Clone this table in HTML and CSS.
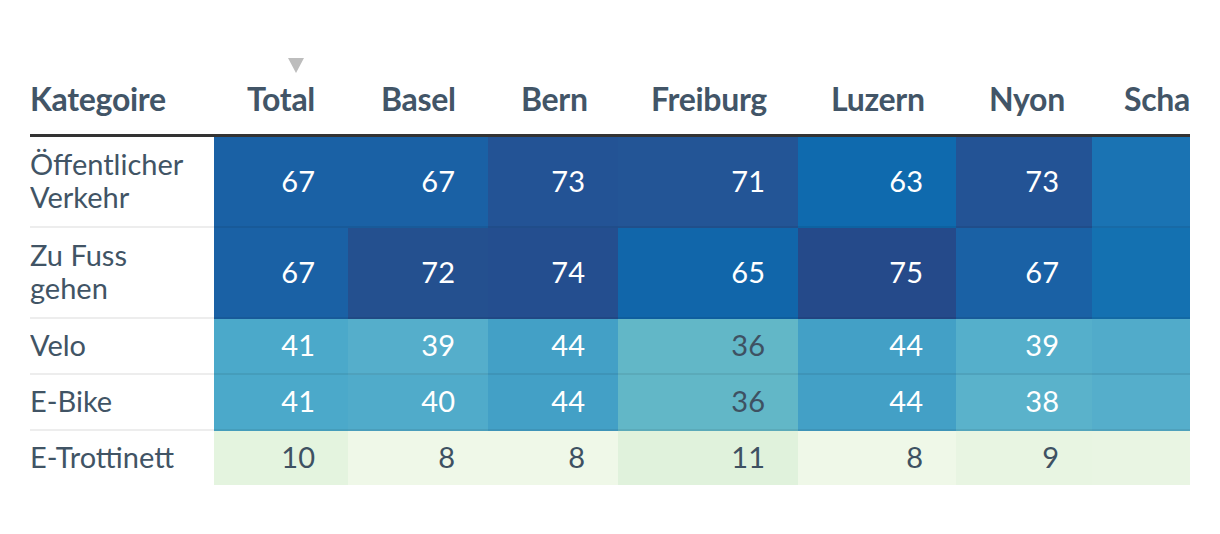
FILE: index.html
```html
<!DOCTYPE html>
<html lang="de">
<head>
<meta charset="utf-8">
<title>Tabelle</title>
<link rel="stylesheet" href="styles.css">
</head>
<body>
<div class="wrap">
  <table class="heat">
    <colgroup>
      <col class="c-cat">
      <col class="c-total">
      <col class="c-basel">
      <col class="c-bern">
      <col class="c-freiburg">
      <col class="c-luzern">
      <col class="c-nyon">
      <col class="c-scha">
    </colgroup>
    <thead>
      <tr>
        <th class="cat">Kategoire</th>
        <th class="num sorted">Total<span class="sort-arrow"></span></th>
        <th class="num">Basel</th>
        <th class="num">Bern</th>
        <th class="num">Freiburg</th>
        <th class="num">Luzern</th>
        <th class="num">Nyon</th>
        <th class="num scha">Scha</th>
      </tr>
    </thead>
    <tbody>
      <tr class="tall">
        <td class="cat">Öffentlicher<br>Verkehr</td>
        <td class="num light" style="background:#1a61a5">67</td>
        <td class="num light" style="background:#1a61a5">67</td>
        <td class="num light" style="background:#235395">73</td>
        <td class="num light" style="background:#235596">71</td>
        <td class="num light" style="background:#0f6aae">63</td>
        <td class="num light" style="background:#235395">73</td>
        <td class="num light" style="background:#1a73b3"></td>
      </tr>
      <tr class="tall">
        <td class="cat">Zu Fuss<br>gehen</td>
        <td class="num light" style="background:#1a61a5">67</td>
        <td class="num light" style="background:#24508f">72</td>
        <td class="num light" style="background:#244e8f">74</td>
        <td class="num light" style="background:#1166aa">65</td>
        <td class="num light" style="background:#254a8a">75</td>
        <td class="num light" style="background:#1a61a5">67</td>
        <td class="num light" style="background:#1471b1"></td>
      </tr>
      <tr>
        <td class="cat">Velo</td>
        <td class="num light" style="background:#4ba9ca">41</td>
        <td class="num light" style="background:#55aecb">39</td>
        <td class="num light" style="background:#43a0c6">44</td>
        <td class="num dark" style="background:#62b7c7">36</td>
        <td class="num light" style="background:#43a0c6">44</td>
        <td class="num light" style="background:#55afcb">39</td>
        <td class="num light" style="background:#51abca"></td>
      </tr>
      <tr>
        <td class="cat">E-Bike</td>
        <td class="num light" style="background:#4ba9ca">41</td>
        <td class="num light" style="background:#50abca">40</td>
        <td class="num light" style="background:#43a0c6">44</td>
        <td class="num dark" style="background:#62b7c7">36</td>
        <td class="num light" style="background:#43a0c6">44</td>
        <td class="num light" style="background:#5ab2cb">38</td>
        <td class="num light" style="background:#55aecb"></td>
      </tr>
      <tr class="last">
        <td class="cat">E-Trottinett</td>
        <td class="num dark" style="background:#e4f4df">10</td>
        <td class="num dark" style="background:#eff8e8">8</td>
        <td class="num dark" style="background:#eff8e8">8</td>
        <td class="num dark" style="background:#e0f2dc">11</td>
        <td class="num dark" style="background:#eff8e8">8</td>
        <td class="num dark" style="background:#e8f5e2">9</td>
        <td class="num dark" style="background:#e9f5e3"></td>
      </tr>
    </tbody>
  </table>
</div>
</body>
</html>
```

FILE: styles.css
```css
html, body {
  margin: 0;
  padding: 0;
  background: #ffffff;
}

body {
  font-family: Lato, "Open Sans", "Noto Sans", sans-serif;
  color: #415465;
}

.wrap {
  margin: 0 30px;
  padding-top: 46px;
  width: 1160px;
  overflow: hidden;
}

.heat {
  border-collapse: separate;
  border-spacing: 0;
  table-layout: fixed;
  width: 1160px;
}

.c-cat { width: 184px; }
.c-total { width: 134px; }
.c-basel { width: 140px; }
.c-bern { width: 130px; }
.c-freiburg { width: 180px; }
.c-luzern { width: 158px; }
.c-nyon { width: 136px; }
.c-scha { width: 98px; }

.heat th {
  font-size: 32px;
  font-weight: 700;
  line-height: 38px;
  letter-spacing: -0.3px;
  color: #425567;
  padding: 34px 33px 16px 33px;
  border-bottom: 3px solid #333333;
  vertical-align: bottom;
  white-space: nowrap;
  text-align: right;
}

.heat th.cat {
  text-align: left;
  padding-left: 0;
}

.heat th.scha {
  text-align: left;
  padding-left: 32px;
  padding-right: 0;
  overflow: hidden;
}

.heat th.sorted {
  position: relative;
}

.sort-arrow {
  position: absolute;
  top: 12px;
  right: 44px;
  width: 0;
  height: 0;
  border-left: 8px solid transparent;
  border-right: 8px solid transparent;
  border-top: 15px solid #bdbdbd;
}

.heat td {
  font-size: 29px;
  line-height: 33px;
  padding: 9px 33px 12px 33px;
  border-bottom: 2px solid rgba(0, 0, 0, 0.07);
  vertical-align: middle;
  white-space: nowrap;
}

.heat tr.tall td.cat {
  padding-top: 10px;
  padding-bottom: 13px;
}

.heat tr.last td {
  border-bottom: 0;
}

.heat td.cat {
  text-align: left;
  padding-left: 0;
  color: #415465;
}

.heat td.num {
  text-align: right;
}

.heat td.light {
  color: #ffffff;
}

.heat td.dark {
  color: #3e5162;
}
```
